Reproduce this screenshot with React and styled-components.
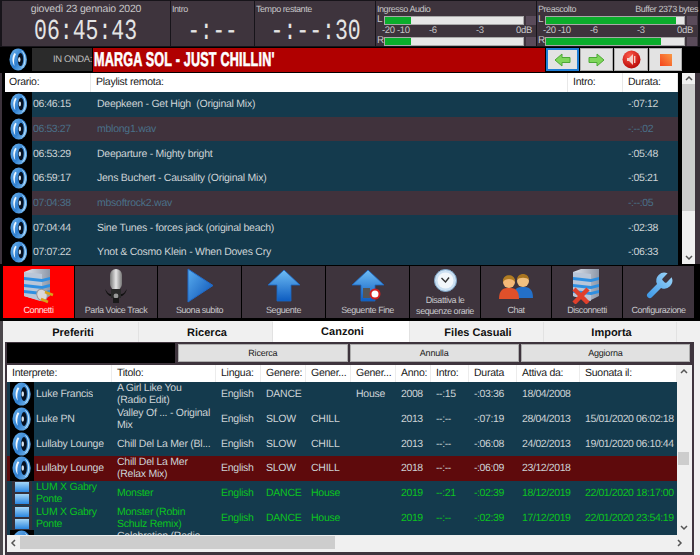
import React from 'react';
import styled, { createGlobalStyle } from 'styled-components';

const Global = createGlobalStyle`
    html, body { margin: 0; padding: 0; background: #3e343d; overflow: hidden; }
    * { box-sizing: border-box; }
`;

const Page = styled.div`
    width: 700px;
    height: 555px;
    overflow: hidden;
    display: flex;
    flex-direction: column;
    background: #000;
    font-family: "Liberation Sans", Arial, sans-serif;
    font-size: 10.5px;
    letter-spacing: -0.25px;
    text-rendering: geometricPrecision;
    color: #cfd3d6;
`;

/* ---- top strip ---- */
const TopBar = styled.div`
    height: 47px;
    flex: none;
    display: flex;
    gap: 1px;
    padding: 1px 2px 1px 2px;
    background: #17141a;
`;
const Panel = styled.div`
    width: ${p => p.$w}px;
    flex: none;
    background: #3e343d;
    display: flex;
    flex-direction: column;
    align-items: ${p => (p.$center ? 'center' : 'stretch')};
`;
const DateText = styled.div`
    font-size: 10.5px;
    line-height: 14px;
    margin-top: 1px;
    letter-spacing: -0.2px;
    color: #c6c6c8;
`;
const Clock = styled.div`
    font-family: "Liberation Mono", monospace;
    font-size: 29px;
    line-height: 20px;
    margin-top: 6px;
    letter-spacing: 0;
    color: #e4e4e4;
    text-align: center;
    transform: scaleX(0.74);
    transform-origin: center;
    white-space: nowrap;
`;
const PanelLabel = styled.div`
    font-size: 9px;
    letter-spacing: -0.45px;
    line-height: 12px;
    padding: 2px 0 0 1px;
    color: #c6c6c8;
    display: flex;
    justify-content: space-between;
`;
const BigValue = styled(Clock)`
    margin-top: 7px;
    transform: scaleX(${p => p.$sx || 0.8});
`;
const MeterHead = styled(PanelLabel)`
    height: 14px;
    white-space: nowrap;
`;
const MeterRow = styled.div`
    display: flex;
    align-items: center;
    height: 10px;
    font-size: 10px;
    line-height: 10px;
    padding-left: 1px;
`;
const MeterLetter = styled.span`
    width: 7px;
    color: #c6c6c8;
`;
const Track = styled.div`
    width: 140px;
    height: 9px;
    background: #e6e6e6;
    border: 1px solid #a9a9a9;
    flex: none;
`;
const Fill = styled.div`
    height: 100%;
    background: #0bad2c;
`;
const Peak = styled.div`
    width: 10px;
    height: 9px;
    margin-left: 2px;
    background: #5a4b5a;
`;
const Scale = styled.div`
    height: 11px;
    display: flex;
    font-size: 9.5px;
    letter-spacing: -0.3px;
    line-height: 11px;
    color: #c6c6c8;
`;
const Tick = styled.span`
    width: ${p => p.$w}px;
    flex: none;
    white-space: nowrap;
`;

/* ---- on air strip ---- */
const AirBar = styled.div`
    height: 26px;
    flex: none;
    display: flex;
    align-items: center;
    padding: 1px 0 2px 5px;
`;
const AirIcon = styled.div`
    width: 27px;
    display: flex;
    justify-content: center;
`;
const AirLabel = styled.div`
    width: 60px;
    height: 23px;
    background: #2b2b2b;
    color: #bdbdbd;
    font-size: 9.5px;
    letter-spacing: -0.4px;
    line-height: 23px;
    text-align: right;
    white-space: nowrap;
`;
const AirTitle = styled.div`
    width: 452px;
    height: 24px;
    margin-left: 1px;
    padding-left: 1px;
    background: #b00000;
    color: #fff;
    font-weight: bold;
    font-size: 20px;
    line-height: 24px;
    letter-spacing: 0.3px;
    white-space: nowrap;
`;
const AirTitleText = styled.span`
    display: inline-block;
    -webkit-text-stroke: 0.6px #fff;
    transform: scaleX(0.63);
    transform-origin: left center;
`;
const AirButtons = styled.div`
    display: flex;
    gap: 1px;
    margin-left: 1px;
`;
const AirButton = styled.div`
    width: ${p => p.$w || 33}px;
    height: 23px;
    background: #e3e3e3;
    border: ${p => (p.$focus ? '2px solid #1e7ed6' : '1px solid #adadad')};
    display: flex;
    align-items: center;
    justify-content: center;
`;

/* ---- remote playlist ---- */
const Playlist = styled.div`
    height: 191px;
    flex: none;
    display: flex;
    border-left: 2px solid #3e343d;
    padding-left: 3px;
`;
const ListColumn = styled.div`
    width: 673px;
    flex: none;
`;
const ListHead = styled.div`
    height: 19px;
    display: grid;
    grid-template-columns: 86px 477px 55px 55px;
    background: #fff;
    color: #1a1a1a;
    line-height: 19px;
`;
const HeadCell = styled.div`
    padding-left: ${p => p.$pad || 4}px;
    border-right: 1px solid #e8e8e8;
    white-space: nowrap;
    overflow: hidden;
`;
const ListRow = styled.div`
    height: 24.67px;
    display: grid;
    grid-template-columns: 27px 59px 477px 55px 55px;
    align-items: center;
    background: ${p => (p.$file ? '#40323c' : '#143a4d')};
    color: ${p => (p.$file ? '#4a7088' : '#cdd3d6')};
`;
const IconCell = styled.div`
    background: #000;
    height: 100%;
    display: flex;
    align-items: center;
    justify-content: center;
`;
const Cell = styled.div`
    padding-left: ${p => p.$pad ?? 5}px;
    white-space: nowrap;
    overflow: hidden;
    letter-spacing: ${p => (p.$num ? '-0.4px' : 'inherit')};
`;
const ScrollV = styled.div`
    width: 13px;
    margin-left: 4px;
    flex: none;
    background: #f0f0f0;
    display: flex;
    flex-direction: column;
    justify-content: space-between;
`;
const Arrow = styled.div`
    height: ${p => p.$h || 15}px;
    flex: none;
    display: flex;
    align-items: center;
    justify-content: center;
`;
const ThumbV = styled.div`
    height: ${p => p.$h}px;
    background: #cdcdcd;
    flex: none;
    margin-top: ${p => p.$top || 0}px;
`;
const ThumbArea = styled.div`
    flex: 1;
`;
const RightGap = styled.div`
    flex: 1;
    background: #3e343d;
`;

/* ---- big toolbar ---- */
const Toolbar = styled.div`
    margin-top: 2px;
    height: 52px;
    flex: none;
    display: flex;
    gap: 1px;
    padding-left: 3px;
`;
const Tool = styled.div`
    width: ${p => p.$w}px;
    flex: none;
    background: ${p => (p.$on ? '#ff0000' : '#3e343d')};
    color: ${p => (p.$on ? '#ffe0e0' : '#c8c8cc')};
    display: flex;
    flex-direction: column;
    align-items: center;
    font-size: 9px;
    letter-spacing: -0.45px;
    line-height: 11px;
    text-align: center;
    overflow: hidden;
`;
const ToolIcon = styled.div`
    height: 39px;
    flex: none;
    display: flex;
    align-items: center;
    justify-content: center;
`;
const ToolIconSmall = styled(ToolIcon)`
    height: 29px;
`;
const ToolText = styled.div`
    white-space: nowrap;
`;

/* ---- lower tabbed part ---- */
const Lower = styled.div`
    margin-top: 3px;
    flex: 1;
    min-height: 0;
    background: #f0f0f0;
    border-left: 3px solid #4b474b;
    padding-left: 2px;
    display: flex;
    flex-direction: column;
`;
const Tabs = styled.div`
    height: 21px;
    flex: none;
    display: flex;
`;
const Tab = styled.div`
    width: ${p => p.$w}px;
    flex: none;
    height: ${p => (p.$on ? 21 : 20)}px;
    margin-top: ${p => (p.$on ? 0 : 1)}px;
    padding-left: 3px;
    background: ${p => (p.$on ? '#fff' : '#f0f0f0')};
    border-right: 1px solid #e2e2e2;
    text-align: center;
    line-height: 22px;
    font-weight: bold;
    font-size: 11px;
    letter-spacing: 0;
    color: #111;
`;
const TabBody = styled.div`
    width: 689px;
    height: 213px;
    flex: none;
    background: #3e343d;
    border: 2px solid #3e343d;
    border-top: 0;
    padding: 1px 0 0 0;
`;
const SearchRow = styled.div`
    height: 21px;
    display: flex;
    gap: 2px;
    padding-right: 2px;
    background: #3e343d;
`;
const SearchInput = styled.div`
    width: 169px;
    height: 20px;
    background: #000;
    margin-right: 1px;
`;
const SearchButton = styled.div`
    width: 170px;
    height: 18px;
    margin-top: 1px;
    background: #e1e1e1;
    border: 1px solid #adadad;
    color: #222;
    font-size: 9px;
    letter-spacing: -0.2px;
    line-height: 16px;
    text-align: center;
`;
const GridWrap = styled.div`
    height: 187px;
    background: #f0f0f0;
    margin-top: 1px;
    display: flex;
    flex-direction: column;
`;
const GridTop = styled.div`
    height: 170px;
    flex: none;
    display: flex;
`;
const Table = styled.div`
    width: 670px;
    flex: none;
    overflow: hidden;
    background: #143a4d;
`;
const TableRow = styled.div`
    display: grid;
    grid-template-columns: 105px 104px 45px 45px 45px 45px 35px 38px 48px 63px 97px;
    height: ${p => (p.$head ? 17 : 24.67)}px;
    align-items: center;
    line-height: 12px;
    background: ${p => (p.$head ? '#fff' : p.$now ? '#5e0a0c' : '#143a4d')};
    color: ${p => (p.$head ? '#1a1a1a' : p.$green ? '#0cc41e' : '#cdd3d6')};
`;
const TableHead = styled.div`
    padding-left: 5px;
    height: 100%;
    line-height: 17px;
    border-right: 1px solid #ececec;
    white-space: nowrap;
    overflow: hidden;
`;
const TableCell = styled.div`
    padding-left: 5px;
    padding-right: ${p => (p.$wrap ? 4 : 1)}px;
    overflow: hidden;
    white-space: ${p => (p.$wrap ? 'normal' : 'nowrap')};
    letter-spacing: ${p => (p.$num ? '-0.4px' : 'inherit')};
`;
const ArtistCell = styled.div`
    display: flex;
    align-items: center;
    height: 100%;
    padding-left: 3px;
`;
const ArtistIcon = styled.div`
    width: 24px;
    height: 100%;
    flex: none;
    background: ${p => (p.$film ? 'transparent' : '#000')};
    display: flex;
    align-items: center;
    justify-content: center;
`;
const ArtistName = styled.div`
    padding-left: 2px;
    overflow: hidden;
`;
const GridScrollV = styled.div`
    width: 11px;
    margin-left: 1px;
    background: #f0f0f0;
    display: flex;
    flex-direction: column;
`;
const ScrollH = styled.div`
    height: 13px;
    flex: none;
    margin-top: 1px;
    display: flex;
    width: 683px;
`;
const ArrowH = styled.div`
    width: 13px;
    flex: none;
    display: flex;
    align-items: center;
    justify-content: center;
`;
const ThumbH = styled.div`
    width: 315px;
    flex: none;
    background: #cdcdcd;
`;
const ThumbRest = styled.div`
    flex: 1;
    display: flex;
    align-items: center;
    justify-content: flex-end;
    padding-right: 6px;
`;

/* ---- drawings ---- */
let uid = 0;
function Speaker({ size = 26 }) {
    const id = 'sp' + uid++;
    return (
        <svg width={size * 0.8} height={size} viewBox="0 0 20 25">
            <defs>
                <linearGradient id={id} x1="0" y1="0" x2="1" y2="1">
                    <stop offset="0" stopColor="#6db3ec" />
                    <stop offset="0.55" stopColor="#2f7fd0" />
                    <stop offset="1" stopColor="#8cc8f4" />
                </linearGradient>
            </defs>
            <ellipse cx="10" cy="12.5" rx="9.5" ry="12" fill={`url(#${id})`} />
            <path d="M13 3C18 6 18 19 13 22C19.5 21 20 4 13 3Z" fill="#b9e0f9" />
            <ellipse cx="12.5" cy="12.5" rx="3" ry="7.2" fill="#06101f" />
            <path d="M6 5.5C3 9.5 3 15.5 6 19.5C5 15 5.4 10 7.6 6.5Z" fill="#f2f8fd" />
            <ellipse cx="11.2" cy="12.5" rx="1.3" ry="2.8" fill="#d6e4f0" />
        </svg>
    );
}

function Film() {
    const id = 'fm' + uid++;
    return (
        <svg width="20" height="24" viewBox="0 0 20 24">
            <defs>
                <linearGradient id={id} x1="0" y1="0" x2="0" y2="1">
                    <stop offset="0" stopColor="#a5d6f7" />
                    <stop offset="1" stopColor="#2a86e0" />
                </linearGradient>
            </defs>
            <rect x="0" y="0" width="20" height="24" fill="#35303a" />
            <rect x="3" y="1" width="14" height="10" fill={`url(#${id})`} />
            <rect x="3" y="13" width="14" height="10" fill={`url(#${id})`} />
        </svg>
    );
}

const Chevron = ({ dir = 'up' }) => {
    const d = {
        up: 'M1 5L4 2L7 5',
        down: 'M1 2L4 5L7 2',
        left: 'M5 1L2 4L5 7',
        right: 'M2 1L5 4L2 7',
    }[dir];
    return (
        <svg width="8" height="8" viewBox="0 0 8 8">
            <path d={d} fill="none" stroke="#555" strokeWidth="1.5" />
        </svg>
    );
};

const GreenArrow = ({ flip }) => (
    <svg width="17" height="14" viewBox="0 0 17 14" style={flip ? { transform: 'scaleX(-1)' } : undefined}>
        <path d="M8 1L1 7L8 13V9.5H16V4.5H8Z" fill="#7ed65a" stroke="#4da836" strokeWidth="1" />
    </svg>
);

const RedSpeaker = () => (
    <svg width="19" height="19" viewBox="0 0 19 19">
        <defs>
            <radialGradient id="redball" cx="0.4" cy="0.3" r="0.8">
                <stop offset="0" stopColor="#ff5a4a" />
                <stop offset="1" stopColor="#b00000" />
            </radialGradient>
        </defs>
        <circle cx="9.5" cy="9.5" r="9" fill="url(#redball)" />
        <path d="M5 8h2l4-4v11l-4-4H5Z" fill="#f4d0c8" />
        <rect x="12" y="6" width="1.4" height="7" fill="#f4d0c8" />
    </svg>
);

const StopSquare = () => (
    <svg width="12" height="12" viewBox="0 0 12 12">
        <defs>
            <linearGradient id="stopg" x1="0" y1="1" x2="1" y2="0">
                <stop offset="0" stopColor="#f5431c" />
                <stop offset="1" stopColor="#f99a46" />
            </linearGradient>
        </defs>
        <rect width="12" height="12" fill="url(#stopg)" />
    </svg>
);

const ServerBody = ({ id }) => (
    <g>
        <defs>
            <linearGradient id={id} x1="0" y1="0" x2="1" y2="0">
                <stop offset="0" stopColor="#dfe6ef" />
                <stop offset="1" stopColor="#8d97a8" />
            </linearGradient>
        </defs>
        <path d="M2 4L10 1H28L28 28L18 33L2 28Z" fill={`url(#${id})`} />
        <path d="M2 4L20 6V33L2 28Z" fill="#b9c6d8" />
        <path d="M2 9L20 11V14L2 12ZM2 16L20 18V21L2 19ZM2 22L20 24V27L2 25Z" fill="#2f8fe0" />
        <path d="M20 11L28 9V12L20 14ZM20 18L28 16V19L20 21ZM20 24L28 22V25L20 27Z" fill="#2f8fe0" />
    </g>
);

const ConnectIcon = () => (
    <svg width="33" height="36" viewBox="0 0 33 36">
        <ServerBody id="srv1" />
        <ellipse cx="20" cy="27" rx="5" ry="6" fill="#d9d9d9" stroke="#999" transform="rotate(-30 20 27)" />
        <path d="M23 24L31 27M19 31L26 34" stroke="#d9a21a" strokeWidth="2.6" />
    </svg>
);

const DisconnectIcon = () => (
    <svg width="33" height="36" viewBox="0 0 33 36">
        <ServerBody id="srv2" />
        <path d="M3 21L17 35M17 21L3 35" stroke="#e0402c" strokeWidth="4.5" />
    </svg>
);

const MicIcon = () => (
    <svg width="24" height="36" viewBox="0 0 24 36">
        <defs>
            <linearGradient id="micg" x1="0" y1="0" x2="1" y2="0">
                <stop offset="0" stopColor="#777" />
                <stop offset="0.5" stopColor="#e6e6e6" />
                <stop offset="1" stopColor="#777" />
            </linearGradient>
        </defs>
        <rect x="6" y="1" width="12" height="21" rx="6" fill="url(#micg)" />
        <path d="M1 21C3 28 7 29 12 29C17 29 21 28 23 21L20 25C17 27 7 27 4 25Z" fill="#111" />
        <rect x="7" y="21" width="10" height="9" fill="#2a2a2a" />
        <circle cx="12" cy="28" r="2.4" fill="#999" />
        <rect x="9" y="30" width="6" height="5" fill="#1a1a1a" />
    </svg>
);

const PlayIcon = () => (
    <svg width="28" height="35" viewBox="0 0 28 35">
        <defs>
            <linearGradient id="playg" x1="0" y1="0" x2="1" y2="1">
                <stop offset="0" stopColor="#5aaef0" />
                <stop offset="1" stopColor="#0a50b4" />
            </linearGradient>
        </defs>
        <path d="M2 1L27 17.5L2 34Z" fill="url(#playg)" strokeLinejoin="round" stroke="#1f69c8" />
    </svg>
);

const UpArrow = ({ id, children }) => (
    <svg width="34" height="33" viewBox="0 0 34 33">
        <defs>
            <linearGradient id={id} x1="0" y1="0" x2="0" y2="1">
                <stop offset="0" stopColor="#6fbdf5" />
                <stop offset="1" stopColor="#0d5cc0" />
            </linearGradient>
        </defs>
        <path d="M17 1L33 16H24V32H10V16H1Z" fill={`url(#${id})`} stroke="#1b67c4" strokeWidth="0.8" />
        {children}
    </svg>
);

const ClockIcon = () => (
    <svg width="23" height="23" viewBox="0 0 23 23">
        <circle cx="11.5" cy="11.5" r="11" fill="#cbe0f2" stroke="#7ea6c8" />
        <circle cx="11.5" cy="11.5" r="8" fill="#f2f7fb" />
        <path d="M7.5 9L11.5 13L15 8.5" fill="none" stroke="#333" strokeWidth="1.4" />
    </svg>
);

const ChatIcon = () => (
    <svg width="36" height="26" viewBox="0 0 36 26">
        <circle cx="25" cy="8" r="6" fill="#f0c080" />
        <path d="M19 7C19 -1 31 -1 31 7C29 4 21 4 19 7Z" fill="#a87420" />
        <path d="M15 25C15 15 20 14 25 14C30 14 35 15 35 25Z" fill="#2470c8" />
        <circle cx="11" cy="9" r="6" fill="#f4b878" />
        <path d="M5 9C4 0 18 0 17 9C15 5 7 5 5 9Z" fill="#b07c22" />
        <path d="M1 26C1 16 6 15 11 15C16 15 21 16 21 26Z" fill="#e0502a" />
    </svg>
);

const WrenchIcon = () => (
    <svg width="32" height="32" viewBox="0 0 24 24">
        <defs>
            <linearGradient id="wrg" x1="0" y1="1" x2="1" y2="0">
                <stop offset="0" stopColor="#3a96e6" />
                <stop offset="1" stopColor="#9fd6f8" />
            </linearGradient>
        </defs>
        <path d="M14.7 6.3a1 1 0 0 0 0 1.4l1.6 1.6a1 1 0 0 0 1.4 0l3.77-3.77a6 6 0 0 1-7.94 7.94l-6.91 6.91a2.12 2.12 0 0 1-3-3l6.91-6.91a6 6 0 0 1 7.94-7.94l-3.76 3.76z" fill="url(#wrg)" />
    </svg>
);

/* ---- data ---- */
const playlist = [
    { t: '06:46:15', n: 'Deepkeen - Get High\u00a0 (Original Mix)', d: '-:07:12' },
    { t: '06:53:27', n: 'mblong1.wav', d: '-:--:02', file: true },
    { t: '06:53:29', n: 'Deeparture - Mighty bright', d: '-:05:48' },
    { t: '06:59:17', n: 'Jens Buchert - Causality (Original Mix)', d: '-:05:21' },
    { t: '07:04:38', n: 'mbsoftrock2.wav', d: '-:--:05', file: true },
    { t: '07:04:44', n: 'Sine Tunes - forces jack (original beach)', d: '-:02:38' },
    { t: '07:07:22', n: 'Ynot & Cosmo Klein - When Doves Cry', d: '-:06:33' },
];

const songs = [
    ['Luke Francis', 'A Girl Like You (Radio Edit)', 'English', 'DANCE', '', 'House', '2008', '--:15', '-:03:36', '18/04/2008', ''],
    ['Luke PN', 'Valley Of ... - Original Mix', 'English', 'SLOW', 'CHILL', '', '2013', '--:--', '-:07:19', '28/04/2013', '15/01/2020 06:02:18'],
    ['Lullaby Lounge', 'Chill Del La Mer (Bl...', 'English', 'SLOW', 'CHILL', '', '2013', '--:--', '-:06:08', '24/02/2013', '19/01/2020 06:10:44'],
    ['Lullaby Lounge', 'Chill Del La Mer (Relax Mix)', 'English', 'SLOW', 'CHILL', '', '2018', '--:--', '-:06:09', '23/12/2018', '', 'now'],
    ['LUM X Gabry Ponte', 'Monster', 'English', 'DANCE', 'House', '', '2019', '--:21', '-:02:39', '18/12/2019', '22/01/2020 18:17:00', 'green'],
    ['LUM X Gabry Ponte', 'Monster (Robin Schulz Remix)', 'English', 'DANCE', 'House', '', '2019', '--:--', '-:02:39', '17/12/2019', '22/01/2020 23:54:19', 'green'],
    ['', 'Celebration (Radio Edit)', '', '', '', '', '', '', '', '', ''],
];

const heads = ['Interprete:', 'Titolo:', 'Lingua:', 'Genere:', 'Gener...', 'Gener...', 'Anno:', 'Intro:', 'Durata', 'Attiva da:', 'Suonata il:'];

const tools = [
    { w: 71, label: 'Connetti', icon: <ConnectIcon />, on: true },
    { w: 82, label: 'Parla Voice Track', icon: <MicIcon /> },
    { w: 83, label: 'Suona subito', icon: <PlayIcon /> },
    { w: 83, label: 'Seguente', icon: <UpArrow id="ua1" /> },
    {
        w: 83,
        label: 'Seguente Fine',
        icon: (
            <UpArrow id="ua2">
                <rect x="12" y="19" width="7" height="10" fill="#555" />
                <circle cx="24" cy="25" r="4.5" fill="#fff" stroke="#d02020" strokeWidth="2" />
            </UpArrow>
        ),
    },
    { w: 70, label: ['Disattiva le', 'sequenze orarie'], icon: <ClockIcon />, small: true },
    { w: 70, label: 'Chat', icon: <ChatIcon /> },
    { w: 70, label: 'Disconnetti', icon: <DisconnectIcon /> },
    { w: 71, label: 'Configurazione', icon: <WrenchIcon /> },
];

const tabs = [
    { w: 134, label: 'Preferiti' },
    { w: 134, label: 'Ricerca' },
    { w: 137, label: 'Canzoni', on: true },
    { w: 134, label: 'Files Casuali' },
    { w: 133, label: 'Importa' },
];

function Meter({ w, title, right, l, r }) {
    return (
        <Panel $w={w}>
            <MeterHead>
                <span>{title}</span>
                {right && <span>{right}</span>}
            </MeterHead>
            <MeterRow>
                <MeterLetter>L</MeterLetter>
                <Track><Fill style={{ width: `${l}%` }} /></Track>
                <Peak />
            </MeterRow>
            <Scale>
                <Tick $w={6} />
                <Tick $w={15}>-20</Tick>
                <Tick $w={32}>-10</Tick>
                <Tick $w={47}>-6</Tick>
                <Tick $w={40}>-3</Tick>
                <Tick $w={20}>0dB</Tick>
            </Scale>
            <MeterRow>
                <MeterLetter>R</MeterLetter>
                <Track><Fill style={{ width: `${r}%` }} /></Track>
                <Peak />
            </MeterRow>
        </Panel>
    );
}

export default function App() {
    return (
        <Page>
            <Global />
            <TopBar>
                <Panel $w={168} $center>
                    <DateText>giovedì 23 gennaio 2020</DateText>
                    <Clock>06:45:43</Clock>
                </Panel>
                <Panel $w={83}>
                    <PanelLabel>Intro</PanelLabel>
                    <BigValue $sx={0.72}>-:--</BigValue>
                </Panel>
                <Panel $w={120}>
                    <PanelLabel>Tempo restante</PanelLabel>
                    <BigValue $sx={0.74}>-:--:30</BigValue>
                </Panel>
                <Meter w={160} title="Ingresso Audio" l={18.5} r={18.5} />
                <Meter w={161} title="Preascolto" right="Buffer 2373 bytes" l={94.5} r={83} />
            </TopBar>

            <AirBar>
                <AirIcon><Speaker size={23} /></AirIcon>
                <AirLabel>IN ONDA:</AirLabel>
                <AirTitle><AirTitleText>MARGA SOL - JUST CHILLIN'</AirTitleText></AirTitle>
                <AirButtons>
                    <AirButton $focus><GreenArrow /></AirButton>
                    <AirButton><GreenArrow flip /></AirButton>
                    <AirButton $w={34}><RedSpeaker /></AirButton>
                    <AirButton><StopSquare /></AirButton>
                </AirButtons>
            </AirBar>

            <Playlist>
                <ListColumn>
                    <ListHead>
                        <HeadCell>Orario:</HeadCell>
                        <HeadCell $pad={5}>Playlist remota:</HeadCell>
                        <HeadCell $pad={5}>Intro:</HeadCell>
                        <HeadCell $pad={5}>Durata:</HeadCell>
                    </ListHead>
                    {playlist.map(row => (
                        <ListRow key={row.t} $file={row.file}>
                            <IconCell><Speaker size={22} /></IconCell>
                            <Cell $pad={1} $num>{row.t}</Cell>
                            <Cell $pad={6}>{row.n}</Cell>
                            <Cell />
                            <Cell $num>{row.d}</Cell>
                        </ListRow>
                    ))}
                </ListColumn>
                <ScrollV>
                    <Arrow $h={11}><Chevron /></Arrow>
                    <ThumbV $h={127} />
                    <ThumbArea />
                    <Arrow $h={13}><Chevron dir="down" /></Arrow>
                </ScrollV>
                <RightGap />
            </Playlist>

            <Toolbar>
                {tools.map((tool, i) => (
                    <Tool key={i} $w={tool.w} $on={tool.on}>
                        {tool.small ? <ToolIconSmall>{tool.icon}</ToolIconSmall> : <ToolIcon>{tool.icon}</ToolIcon>}
                        {[].concat(tool.label).map(line => <ToolText key={line}>{line}</ToolText>)}
                    </Tool>
                ))}
            </Toolbar>

            <Lower>
                <Tabs>
                    {tabs.map(tab => <Tab key={tab.label} $w={tab.w} $on={tab.on}>{tab.label}</Tab>)}
                </Tabs>
                <TabBody>
                    <SearchRow>
                        <SearchInput />
                        <SearchButton>Ricerca</SearchButton>
                        <SearchButton>Annulla</SearchButton>
                        <SearchButton>Aggiorna</SearchButton>
                    </SearchRow>
                    <GridWrap>
                        <GridTop>
                            <Table>
                                <TableRow $head>
                                    {heads.map((h, i) => <TableHead key={i}>{h}</TableHead>)}
                                </TableRow>
                                {songs.map((s, i) => (
                                    <TableRow key={i} $now={s[11] === 'now'} $green={s[11] === 'green'}>
                                        <ArtistCell>
                                            <ArtistIcon $film={s[11] === 'green'}>
                                                {s[11] === 'green' ? <Film /> : <Speaker size={24} />}
                                            </ArtistIcon>
                                            <ArtistName>{s[0]}</ArtistName>
                                        </ArtistCell>
                                        <TableCell $wrap>{s[1]}</TableCell>
                                        {s.slice(2, 11).map((v, j) => <TableCell key={j} $num={j > 3}>{v}</TableCell>)}
                                    </TableRow>
                                ))}
                            </Table>
                            <GridScrollV>
                                <Arrow $h={14}><Chevron /></Arrow>
                                <ThumbV $h={13} $top={73} />
                                <ThumbArea />
                                <Arrow $h={14}><Chevron dir="down" /></Arrow>
                            </GridScrollV>
                        </GridTop>
                        <ScrollH>
                            <ArrowH><Chevron dir="left" /></ArrowH>
                            <ThumbH />
                            <ThumbRest><Chevron dir="right" /></ThumbRest>
                        </ScrollH>
                    </GridWrap>
                </TabBody>
            </Lower>
        </Page>
    );
}
